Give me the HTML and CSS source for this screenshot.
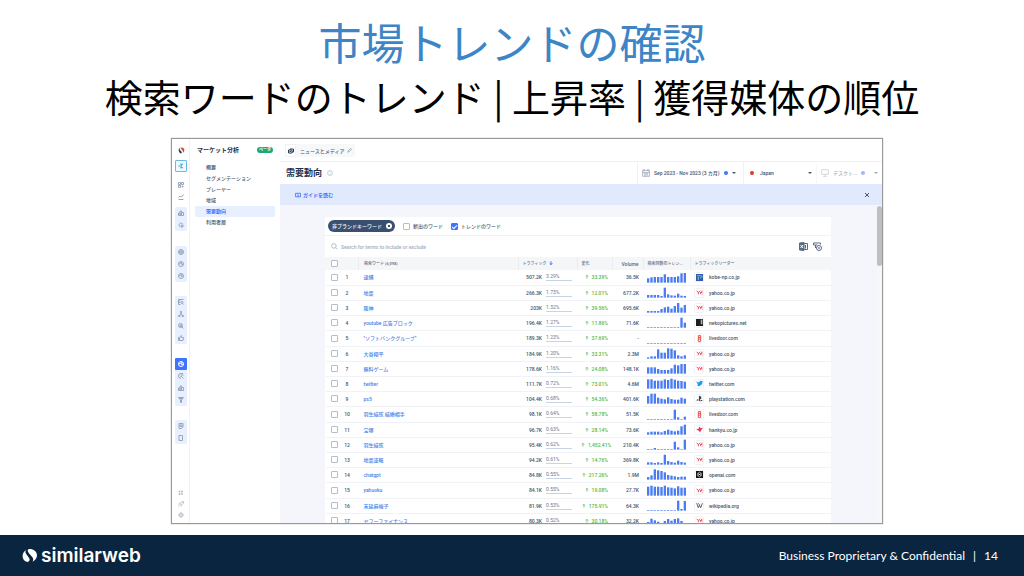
FILE: index.html
```html
<!DOCTYPE html>
<html lang="ja">
<head>
<meta charset="utf-8">
<title>市場トレンドの確認</title>
<link rel="stylesheet" href="styles.css">
</head>
<body>
<svg class="defs" width="0" height="0" aria-hidden="true">
  <symbol id="sparkle" viewBox="0 0 12 12"><path d="M1 6h4M6 1v3l4-2M6 11V8l4 2M5 6l3 0"/></symbol>
  <symbol id="tiles" viewBox="0 0 12 12"><path d="M1 1h4v4H1zM7 1h4v4H7zM1 7h4v4H1zM7 9h4M9 7v4"/></symbol>
  <symbol id="trend" viewBox="0 0 12 12"><path d="M1 11h10M1 7l3-3 3 2 4-5"/></symbol>
  <symbol id="bars" viewBox="0 0 12 12"><path d="M1 6h3v5H1zM4 2h3v9H4zM7 5h4v6H7z"/></symbol>
  <symbol id="target" viewBox="0 0 12 12"><path d="M10 5a4 4 0 1 0-5 5M6 6l5 2-2 1-1 2z"/></symbol>
  <symbol id="globe" viewBox="0 0 12 12"><circle cx="6" cy="6" r="5"/><path d="M1 6h10M6 1c-3 3-3 7 0 10 3-3 3-7 0-10"/></symbol>
  <symbol id="pie" viewBox="0 0 12 12"><circle cx="6" cy="6" r="5"/><path d="M2 6l4-2 1 3 4-1M6 5l2-3"/></symbol>
  <symbol id="list" viewBox="0 0 12 12"><path d="M1 1h10M1 4h4M1 7h3M1 11h4M1 1v10M11 11L9 9"/><circle cx="8" cy="7" r="2"/></symbol>
  <symbol id="tree" viewBox="0 0 12 12"><path d="M6 1v5M6 5L3 9M6 5l3 4M1 9h3v2H1zM8 9h3v2H8zM5 1h2v2H5z"/></symbol>
  <symbol id="quote" viewBox="0 0 12 12"><circle cx="5" cy="5" r="4"/><path d="M4 4h3v3H4zM8 8l3 3"/></symbol>
  <symbol id="thumb" viewBox="0 0 12 12"><path d="M1 5h2v6H1zM3 6l3-5c2 0 1 3 1 4h4l-1 6H3"/></symbol>
  <symbol id="refine" viewBox="0 0 12 12"><path d="M10 1H6a5 5 0 0 0 0 10M5 4h6M5 7h3M8 8l3 3"/></symbol>
  <symbol id="search" viewBox="0 0 12 12"><circle cx="5" cy="5" r="4"/><path d="M8 8l3 3"/></symbol>
  <symbol id="funnel" viewBox="0 0 12 12"><path d="M1 1h10L7 6v5H5V6zM3 3h6"/></symbol>
  <symbol id="phone" viewBox="0 0 12 12"><path d="M2 1h7v10H2z"/></symbol>
  <symbol id="report" viewBox="0 0 12 12"><path d="M2 1h8v7l-3 3H2zM4 4h4v3H4z"/></symbol>
  <symbol id="grid" viewBox="0 0 12 12"><path d="M2 2h2v2H2zM7 2h2v2H7zM2 7h2v2H2zM7 7h2v2H7z"/></symbol>
  <symbol id="rocket" viewBox="0 0 12 12"><path d="M11 1L7 2 3 6l3 3 4-4zM3 5L1 6M7 9l-1 2M2 9l-1 2"/></symbol>
  <symbol id="gear" viewBox="0 0 12 12"><circle cx="6" cy="6" r="4"/><circle cx="6" cy="6" r="1"/><path d="M6 1v1M6 10v1M1 6h1M10 6h1"/></symbol>
  <symbol id="mark" viewBox="0 0 26 24"><path fill="#fff" stroke="none" d="M8 2C4 4 1 8 1 13c0 5 3 9 7 10 4 1 7-3 4-7L7 9C5 6 6 4 8 2zM11 1c4-1 15 1 15 11 0 5-4 9-8 11 2-3 2-5 0-8L12 8C10 5 9 3 11 1z"/></symbol>
</svg>
<main class="slide">
  <header class="heading">
    <h1>市場トレンドの確認</h1>
    <h2>検索ワードのトレンド | 上昇率 | 獲得媒体の順位</h2>
  </header>

  <section class="app">
    <nav class="rail">
      <span class="cell"><svg class="brand" viewBox="0 0 12 12"><path fill="#2b3c55" stroke="none" d="M3 1C0 4 1 10 5 11c3 0 1-3 0-4S2 4 3 1z"/><path fill="#e8452c" stroke="none" d="M5 1c5-1 8 4 4 9 0-3-1-3-2-5S3 2 5 1z"/></svg></span>
      <button class="cell boxed" aria-label="AI"><svg><use href="#sparkle"/></svg></button>
      <div class="plain"><button class="cell" aria-label="ホーム"><svg><use href="#tiles"/></svg></button><button class="cell" aria-label="トレンド"><svg><use href="#trend"/></svg></button></div>
      <div class="group near"><button class="cell" aria-label="企業"><svg><use href="#bars"/></svg></button><button class="cell" aria-label="ターゲット"><svg><use href="#target"/></svg></button></div>
      <div class="group first"><button class="cell" aria-label="サイト"><svg><use href="#globe"/></svg></button><button class="cell" aria-label="シェア"><svg><use href="#pie"/></svg></button><button class="cell" aria-label="分布"><svg><use href="#pie"/></svg></button></div>
      <div class="group"><button class="cell" aria-label="キーワード"><svg><use href="#list"/></svg></button><button class="cell" aria-label="構成"><svg><use href="#tree"/></svg></button><button class="cell" aria-label="広告"><svg><use href="#quote"/></svg></button><button class="cell" aria-label="評価"><svg><use href="#thumb"/></svg></button></div>
      <div class="group"><button class="cell current" aria-label="マーケット"><svg><use href="#pie"/></svg></button><button class="cell" aria-label="検索"><svg><use href="#refine"/></svg></button><button class="cell" aria-label="比較"><svg><use href="#bars"/></svg></button><button class="cell" aria-label="ファネル"><svg><use href="#funnel"/></svg></button></div>
      <div class="group"><button class="cell" aria-label="レポート"><svg><use href="#report"/></svg></button><button class="cell" aria-label="アプリ"><svg><use href="#phone"/></svg></button></div>
      <div class="tail"><button class="cell" aria-label="一覧"><svg><use href="#grid"/></svg></button><button class="cell" aria-label="新機能"><svg><use href="#rocket"/></svg></button><button class="cell" aria-label="設定"><svg><use href="#gear"/></svg></button></div>
    </nav>

    <nav class="side">
      <div class="side-head"><strong>マーケット分析</strong><span class="beta">ベータ</span></div>
      <a href="#">概要</a>
      <a href="#">セグメンテーション</a>
      <a href="#">プレーヤー</a>
      <a href="#">地域</a>
      <a href="#" class="selected">需要動向</a>
      <a href="#">利用者層</a>
    </nav>

    <div class="main">
      <div class="crumbs"><button class="chip"><span class="chip-icon"><svg viewBox="0 0 12 12"><path d="M1 4h7v6H1zM4 4V2h7v6H8M3 7h3"/></svg></span>ニュースとメディア<svg class="pencil" viewBox="0 0 12 12"><path d="M2 10l1-3 6-6 2 2-6 6z"/></svg></button></div>
      <div class="titlebar">
        <h3>需要動向</h3>
        <svg class="info" viewBox="0 0 12 12"><circle cx="6" cy="6" r="5"/><path d="M6 5v4M6 3v1"/></svg>
        <button class="picker date"><svg class="cal" viewBox="0 0 12 12"><path d="M1 2h10v9H1zM1 5h10M3 0v3M9 0v3M3 7h6M3 9h6"/></svg><span>Sep 2023 - Nov 2023 (3 カ月)</span><i class="dot"></i><i class="caret"></i></button>
        <button class="picker country"><i class="dot red"></i><span>Japan</span><i class="caret end"></i></button>
        <button class="picker device"><svg viewBox="0 0 12 12"><path d="M1 1h10v7H1zM6 8v3M3 11h6"/></svg><span>デスクト...</span><i class="dot"></i><i class="caret end"></i></button>
      </div>
      <div class="banner"><a href="#"><svg viewBox="0 0 14 12"><path d="M1 2h5l1 1 1-1h5v8H8l-1 1-1-1H1zM7 3v8"/></svg>ガイドを読む</a><button class="close" aria-label="閉じる"><svg viewBox="0 0 12 12"><path d="M2 2l8 8M10 2l-8 8"/></svg></button></div>
      <div class="body">
        <div class="card">
          <div class="filters">
            <button class="pill">非ブランドキーワード<svg viewBox="0 0 12 12"><circle cx="6" cy="6" r="6"/><path d="M4 4l4 4M8 4l-4 4"/></svg></button>
            <label><input type="checkbox">新出のワード</label>
            <label><input type="checkbox" checked>トレンドのワード</label>
          </div>
          <div class="searchbar">
            <svg><use href="#search"/></svg>
            <input type="text" aria-label="検索" placeholder="Search for terms to include or exclude">
            <button aria-label="Excel"><svg viewBox="0 0 18 18"><path class="solid" d="M1 2l9-1v16l-9-1z"/><path d="M10 3h7v12h-7M13 6v7"/><path class="cut" d="M3 6l5 6M8 6l-5 6"/></svg></button>
            <button aria-label="列の設定"><svg viewBox="0 0 18 18"><path d="M5 12V6H1V2h14v3M5 6h4"/><circle cx="12" cy="12" r="5"/><circle cx="12" cy="12" r="1"/></svg></button>
          </div>
          <table>
            <colgroup><col class="c-check"><col class="c-num"><col><col class="c-traffic"><col class="c-change"><col class="c-volume"><col class="c-trend"><col class="c-leader"></colgroup>
            <thead><tr><th><input type="checkbox" aria-label="すべて選択"></th><th></th><th>検索ワード (6,098)</th><th>トラフィック <svg class="sort" viewBox="0 0 12 12"><path d="M6 1v10M2 7l4 4 4-4"/></svg></th><th>変化</th><th class="right">Volume</th><th>検索回数のトレン...</th><th>トラフィックリーダー</th></tr></thead>
            <tbody id="rows"></tbody>
          </table>
        </div>
        <div class="scroll"><div class="thumb"></div></div>
      </div>
    </div>
  </section>

  <footer class="footer">
    <div class="logo"><svg><use href="#mark"/></svg>similarweb</div>
    <div class="legal"><span>Business Proprietary &amp; Confidential</span><span>|</span><span>14</span></div>
  </footer>
</main>
<script src="script.js"></script>
</body>
</html>
```
FILE: script.js
```js
const data = [
  ["逮捕", "507.2K", "3.29%", "33.39%", "36.5K", "kobe", "kobe-np.co.jp", [13,16,17,17,17,25,17,17,17,19,28,29]],
  ["地震", "266.3K", "1.73%", "12.01%", "677.2K", "yahoo", "yahoo.co.jp", [8,8,8,8,5,30,10,7,6,12,6,5]],
  ["阪神", "203K", "1.32%", "39.56%", "695.6K", "yahoo", "yahoo.co.jp", [5,5,5,5,11,16,18,12,20,29,15,23]],
  ["youtube 広告ブロック", "196.4K", "1.27%", "11.86%", "71.6K", "neko", "nekopictures.net", [2,2,2,2,2,2,2,2,2,2,30,15]],
  ["\"ソフトバンクグループ\"", "189.3K", "1.23%", "37.69%", "-", "live", "livedoor.com", [2,2,2,2,2,2,2,2,2,2,2,2]],
  ["大谷翔平", "184.9K", "1.20%", "33.31%", "2.3M", "yahoo", "yahoo.co.jp", [4,7,7,28,18,18,31,30,25,10,7,10]],
  ["無料ゲーム", "178.6K", "1.16%", "24.08%", "148.1K", "yahoo", "yahoo.co.jp", [19,19,19,14,11,11,11,16,27,25,29,29]],
  ["twitter", "111.7K", "0.72%", "73.01%", "4.6M", "twitter", "twitter.com", [28,28,24,24,24,28,26,30,27,24,23,21]],
  ["ps5", "104.4K", "0.68%", "54.36%", "401.6K", "ps", "playstation.com", [23,30,30,18,15,13,19,14,12,12,18,15]],
  ["羽生結弦 結婚相手", "98.1K", "0.64%", "58.78%", "51.5K", "live", "livedoor.com", [2,2,2,2,2,2,2,2,30,7,2,9]],
  ["宝塚", "96.7K", "0.63%", "28.14%", "73.6K", "hankyu", "hankyu.co.jp", [7,9,9,9,7,11,15,12,10,12,25,30]],
  ["羽生結弦", "95.4K", "0.62%", "1,452.41%", "210.4K", "yahoo", "yahoo.co.jp", [2,2,5,2,2,2,2,2,24,7,2,30]],
  ["地震速報", "94.2K", "0.61%", "14.76%", "369.8K", "yahoo", "yahoo.co.jp", [7,7,5,7,5,30,11,8,6,12,8,6]],
  ["chatgpt", "84.8K", "0.55%", "217.26%", "1.9M", "openai", "openai.com", [8,13,31,28,26,22,14,12,10,8,9,9]],
  ["yahuoku", "84.1K", "0.55%", "19.08%", "27.7K", "yahoo", "yahoo.co.jp", [27,30,27,27,26,30,25,24,22,28,24,24]],
  ["末延麻裕子", "81.9K", "0.53%", "175.91%", "64.3K", "wiki", "wikipedia.org", [2,2,2,2,2,2,2,2,2,30,5,29]],
  ["ヤフーファイナンス", "80.3K", "0.52%", "30.18%", "32.2K", "yahoo", "yahoo.co.jp", [11,21,16,12,8,14,20,15,20,22,14,7]]
];

const icons = {
  yahoo: '<path d="M1 3l3 3v3M7 3L4 6M7 5l1 3 1-3M10 3v4M10 9h1" stroke="#e8354d" stroke-width="1.500"/>',
  kobe: '<path fill="#2f5fa8" d="M0 0h12v12H0z"/><path stroke="#fff" d="M2 3h5M4 5v5M8 2l3 3M7 7l3-2"/>',
  neko: '<path fill="#1d1d20" d="M0 0h12v12H0z"/><path fill="#b9a49c" d="M8 1h3v8H8z"/>',
  live: '<path d="M4 1h4v10H4zM4 4h4M4 7h4" stroke="#e0413c" stroke-width="1.500"/>',
  twitter: '<path fill="#1d9bf0" d="M1 2c2 2 3 2 5 2 0-3 3-3 4-2l2 0-1 2c0 5-5 8-10 6l3-1-2-2 1 0-2-3z"/>',
  ps: '<path fill="#3c4350" d="M5 1l4 2v4H7v4L5 10zM0 9l4-2v3zM8 8l4 1-4 2z"/>',
  hankyu: '<path fill="#e0355f" d="M6 1l2 3 4-1-3 4-2 4-2-3-5-2 4-1z"/>',
  openai: '<path fill="#151515" d="M0 0h12v12H0z"/><path stroke="#fff" d="M6 2l3 2v4l-3 2-3-2V4zM3 4l6 4M9 4L3 8"/>',
  wiki: '<path d="M1 2l3 8 2-5 2 5 3-8M4 2l2 3" stroke="#555" stroke-width="1.500"/>'
};

document.getElementById("rows").innerHTML = data.map((r, i) => {
  const bars = r[7].map((h, n) => `<rect x="${n * 10}" y="${32 - h}" width="7" height="${h}"/>`).join("");
  return `<tr>
    <td><input type="checkbox" aria-label="${i + 1}"></td>
    <td class="num">${i + 1}</td>
    <td><a href="#">${r[0]}</a></td>
    <td><div class="traffic"><span>${r[1]}</span><span class="share">${r[2]}</span></div></td>
    <td class="change"><svg viewBox="0 0 12 12"><path d="M6 11V1M2 5l4-4 4 4"/></svg>${r[3]}</td>
    <td class="right">${r[4]}</td>
    <td><svg class="spark" viewBox="0 0 120 33" preserveAspectRatio="none">${bars}</svg></td>
    <td><div class="leader"><span class="fav"><svg viewBox="0 0 12 12">${icons[r[5]]}</svg></span>${r[6]}</div></td>
  </tr>`;
}).join("");
```
FILE: styles.css
```css
* { box-sizing: border-box; }
body { margin: 0; background: #fff; }
button { border: 0; padding: 0; background: none; font: inherit; color: inherit; }
a { text-decoration: none; color: inherit; }
svg { fill: none; stroke: currentColor; flex: none; }
.defs { position: absolute; }

.slide { display: flex; flex-direction: column; height: 100vh; font-family: Roboto, "Noto Sans CJK JP", sans-serif; }
.heading { text-align: center; padding-top: 14px; height: 138px; flex: none; font-family: "Noto Sans CJK JP", sans-serif; }
h1, h2 { margin: 0; font-weight: 400; white-space: nowrap; }
h1 { font-size: 43px; line-height: 54px; color: #3d85c6; }
h2 { font-size: 38px; line-height: 56px; color: #000; }

.app { flex: 1; min-height: 0; margin: 0 141px 11px 171px; display: flex; overflow: hidden; border: 1px solid #999; box-shadow: 0 0 1px #999; font-size: 5px; line-height: 8px; font-weight: 500; color: #46566e; }

.rail { width: 18px; flex: none; padding: 5px 2px 3px 3px; display: flex; flex-direction: column; border-right: 1px solid #f0f2f6; color: #9aa6ba; }
.cell { display: flex; align-items: center; justify-content: center; width: 12px; height: 12px; flex: none; }
.cell svg { width: 6px; height: 6px; stroke-width: 2; }
.cell .brand { width: 7px; height: 7px; }
.boxed { margin-top: 4px; border: 1px solid #6cb8ea; border-radius: 1px; color: #2f9bd6; background: #f1f9ff; }
.plain { margin-top: 7px; }
.group { margin-top: 14px; background: #e8effe; border-radius: 2px; }
.group.near { margin-top: 4px; }
.group.first { margin-top: 15px; }
.current { background: #3e74fe; color: #fff; border-radius: 1px; }
.tail { margin-top: auto; color: #b4bdcb; }
.tail .cell { height: 11px; }

.side { width: 90px; flex: none; padding: 7px 5px; display: flex; flex-direction: column; }
.side-head { display: flex; justify-content: space-between; align-items: center; padding: 0 2px; margin-bottom: 8px; font-size: 6px; color: #1f3350; }
.beta { background: #1ea873; color: #fff; font-size: 4px; line-height: 6px; border-radius: 3px; padding: 0 2px; font-weight: 700; }
.side a { padding-left: 11px; line-height: 11px; }
.side .selected { background: #e8effe; color: #3e74fe; font-weight: 700; border-radius: 1px; }

.main { flex: 1; min-width: 0; display: flex; flex-direction: column; }
.crumbs { height: 23px; padding: 5px; border-bottom: 1px solid #f0f2f6; flex: none; }
.chip { display: flex; align-items: center; height: 13px; background: #f7f8fa; border-radius: 2px; padding-right: 3px; white-space: nowrap; }
.chip-icon { width: 11px; height: 13px; margin-right: 4px; display: flex; align-items: center; justify-content: center; background: #fff; border: 1px solid #f0f2f6; color: #2b3c55; }
.chip-icon svg { width: 6px; height: 6px; stroke-width: 2; }
.pencil { width: 5px; height: 5px; margin-left: 3px; }
.titlebar { display: flex; align-items: stretch; height: 22px; flex: none; padding-left: 6px; }
h3 { margin: 0; font-size: 9px; line-height: 22px; color: #1f3350; }
.info { width: 6px; height: 6px; margin: 8px auto 0 5px; color: #9aa5b5; }
.picker { display: flex; align-items: center; gap: 4px; border-left: 1px solid #f0f2f6; padding: 0 4px; white-space: nowrap; }
.picker svg { width: 8px; height: 8px; color: #8794a8; }
.date { width: 106px; }
.country { width: 73px; }
.device { width: 66px; opacity: .5; }
.dot { width: 4px; height: 4px; border-radius: 50%; background: #3e74fe; }
.red { background: #e0342c; margin: 0 2px; }
.caret { border: 2px solid transparent; border-top-color: #46566e; border-bottom: 0; }
.end { margin-left: auto; }
.banner { height: 21px; flex: none; display: flex; align-items: center; justify-content: space-between; background: #e1e9fd; padding: 0 11px 0 15px; }
.banner a { display: flex; align-items: center; gap: 2px; color: #3e74fe; font-weight: 700; }
.banner svg { width: 6px; height: 6px; stroke-width: 2; }
.close { display: flex; padding: 0 1px; }
.body { flex: 1; min-height: 0; display: flex; justify-content: space-between; background: #f4f6fc; }
.card { flex: 1; min-width: 0; margin: 12px 46px 0 45px; background: #fff; align-self: flex-start; }
.scroll { width: 5px; flex: none; background: #f7f7f7; padding-top: 1px; }
.thumb { height: 60px; border-radius: 3px; background: #bfbfbf; }

.filters { display: flex; align-items: center; gap: 8px; height: 19px; padding-left: 3px; border-bottom: 1px solid #f0f2f6; }
.filters label { display: flex; align-items: center; gap: 3px; }
.pill { display: flex; align-items: center; gap: 4px; height: 12px; padding: 0 3px 0 4px; border-radius: 6px; background: #3a5070; color: #fff; }
.pill svg { width: 6px; height: 6px; }
.pill circle { fill: #fff; stroke: none; }
.pill path { stroke: #3a5070; stroke-width: 2; }
input[type="checkbox"] { appearance: none; display: block; width: 7px; height: 7px; margin: 0; border: 1px solid #b3bdca; border-radius: 1px; background: #fff; }
input[type="checkbox"]:checked { background: #3e74fe; border-color: #3e74fe; }
input:checked::before { content: ""; display: block; width: 4px; height: 2px; margin-top: 1px; border: solid #fff; border-width: 0 0 1px 1px; transform: rotate(-45deg); }
.searchbar { display: flex; align-items: center; height: 21px; padding: 0 9px 0 6px; gap: 5px; color: #5b6b84; }
.searchbar > svg { width: 7px; height: 7px; color: #8794a8; }
.searchbar input { flex: 1; min-width: 0; border: 0; padding: 0; margin-left: -2px; font: inherit; background: none; }
.searchbar input::placeholder { color: #a3adba; opacity: 1; }
.searchbar button { display: flex; }
.searchbar button svg { width: 9px; height: 9px; stroke-width: 2; }
.solid { fill: currentColor; }
.cut { stroke: #fff; }

table { width: 100%; border-collapse: collapse; table-layout: fixed; }
.c-check { width: 14px; }
.c-num { width: 19px; }
.c-traffic { width: 59px; }
.c-change { width: 35px; }
.c-volume { width: 31px; }
.c-trend { width: 47px; }
.c-leader { width: 141px; }
th { height: 13px; padding: 0 0 0 4px; background: #f5f6f8; border-left: 1px solid #eaecf0; text-align: left; font-size: 4px; font-weight: 500; color: #5b6b84; white-space: nowrap; }
th:first-child, th:nth-child(2) { border-left-color: #f5f6f8; }
td { height: 15px; padding: 0 0 0 4px; border-bottom: 1px solid #f0f2f6; white-space: nowrap; }
tr:nth-child(5n) td { height: 16px; }
th:first-child, td:first-child { padding-left: 5px; }
.num { text-align: center; padding: 0 4px 0 0; }
td a { color: #4a80e8; }
td:nth-child(3), th:nth-child(3) { padding-left: 5px; }
.right { text-align: right; padding: 0 4px 0 0; }
th.right { font-size: 5px; }
.sort { width: 4px; height: 4px; color: #3e74fe; stroke-width: 3; margin-left: 2px; }
.traffic { display: flex; justify-content: flex-end; gap: 4px; padding-right: 5px; }
.share { width: 26px; line-height: 7px; border-bottom: 1px solid #c9d3e8; font-weight: 400; color: #6b788c; }
.change { color: #4fb848; text-align: right; padding-right: 4px; }
.change svg { width: 4px; height: 4px; margin-right: 3px; stroke-width: 2; }
.spark { display: block; width: 40px; height: 11px; fill: #4a7df5; stroke: none; }
.leader { display: flex; align-items: center; gap: 5px; }
.fav { display: flex; align-items: center; justify-content: center; width: 10px; height: 10px; border: 1px solid #f0f2f6; border-radius: 2px; }
.fav svg { width: 7px; height: 7px; stroke: none; }

.footer { height: 41px; flex: none; display: flex; align-items: center; justify-content: space-between; padding: 0 26px 0 22px; background: #092540; color: #fff; font-family: Inter, sans-serif; }
.logo { display: flex; align-items: center; gap: 4px; font-size: 19px; line-height: 24px; font-weight: 600; }
.logo svg { width: 15px; height: 15px; }
.legal { display: flex; gap: 8px; font-family: Lato, sans-serif; font-size: 12px; }
```
